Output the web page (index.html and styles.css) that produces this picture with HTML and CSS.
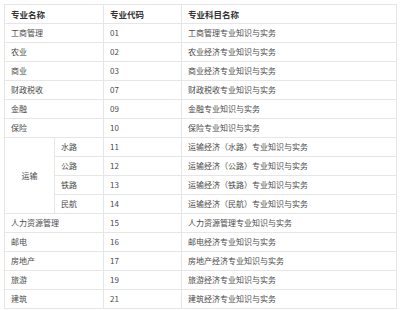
FILE: index.html
```html
<!DOCTYPE html>
<html lang="zh">
<head>
<meta charset="utf-8">
<link rel="stylesheet" href="styles.css">
</head>
<body>
<table class="tbl">
<colgroup>
<col class="c1"><col class="c2"><col class="c3"><col class="c4">
</colgroup>
<thead>
<tr><th colspan="2">专业名称</th><th>专业代码</th><th>专业科目名称</th></tr>
</thead>
<tbody>
<tr><td colspan="2">工商管理</td><td>01</td><td>工商管理专业知识与实务</td></tr>
<tr><td colspan="2">农业</td><td>02</td><td>农业经济专业知识与实务</td></tr>
<tr><td colspan="2">商业</td><td>03</td><td>商业经济专业知识与实务</td></tr>
<tr><td colspan="2">财政税收</td><td>07</td><td>财政税收专业知识与实务</td></tr>
<tr><td colspan="2">金融</td><td>09</td><td>金融专业知识与实务</td></tr>
<tr><td colspan="2">保险</td><td>10</td><td>保险专业知识与实务</td></tr>
<tr><td rowspan="4" class="center">运输</td><td>水路</td><td>11</td><td>运输经济（水路）专业知识与实务</td></tr>
<tr><td>公路</td><td>12</td><td>运输经济（公路）专业知识与实务</td></tr>
<tr><td>铁路</td><td>13</td><td>运输经济（铁路）专业知识与实务</td></tr>
<tr><td>民航</td><td>14</td><td>运输经济（民航）专业知识与实务</td></tr>
<tr><td colspan="2">人力资源管理</td><td>15</td><td>人力资源管理专业知识与实务</td></tr>
<tr><td colspan="2">邮电</td><td>16</td><td>邮电经济专业知识与实务</td></tr>
<tr><td colspan="2">房地产</td><td>17</td><td>房地产经济专业知识与实务</td></tr>
<tr><td colspan="2">旅游</td><td>19</td><td>旅游经济专业知识与实务</td></tr>
<tr><td colspan="2">建筑</td><td>21</td><td>建筑经济专业知识与实务</td></tr>
</tbody>
</table>
</body>
</html>
```
FILE: styles.css
```css
html, body {
  margin: 0;
  padding: 0;
  background: #ffffff;
}
body {
  padding: 4px 0 0 4px;
  font-family: "Noto Sans CJK SC", "Noto Sans", sans-serif;
  font-size: 8px;
  color: #4a4a4a;
}
.tbl {
  border-collapse: collapse;
  table-layout: fixed;
  width: 392px;
}
.c1 { width: 50px; }
.c2 { width: 49px; }
.c3 { width: 78px; }
.c4 { width: 215px; }
.tbl th, .tbl td {
  border: 1px solid #e6e6e6;
  height: 18px;
  padding: 0 0 0 6px;
  text-align: left;
  vertical-align: middle;
  white-space: nowrap;
  line-height: 10px;
}
.tbl th {
  font-weight: bold;
  font-size: 8.5px;
  color: #333333;
}
.tbl td.center {
  text-align: center;
  padding: 0;
}
```
